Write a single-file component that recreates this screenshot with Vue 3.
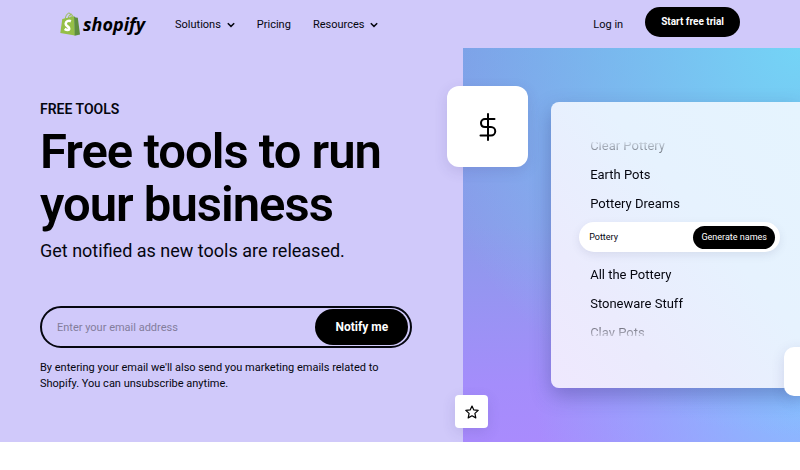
<script setup>
import { ref } from 'vue'

const email = ref('')
const links = [
  { label: 'Solutions', menu: true },
  { label: 'Pricing', menu: false },
  { label: 'Resources', menu: true },
]
const namesAbove = ['Clear Pottery', 'Earth Pots', 'Pottery Dreams']
const namesBelow = ['All the Pottery', 'Stoneware Stuff', 'Clay Pots']
</script>

<template>
  <div class="page">
    <header class="bar">
      <a class="logo" href="#" aria-label="Shopify home">
        <svg class="bag" viewBox="0 0 20 24" aria-hidden="true">
          <path d="M5.2 7C5.6 3.8 7.4 1 9.2 1.1c1.5.1 2 2.400 2 4.900M8.300 6.500C8.700 3.600 10 1.900 11.400 2.200c1 .3 1.400 1.700 1.500 3" fill="none" stroke="#95bf47" stroke-width="1" />
          <path d="M2.300 6.900 14 4.200 15 23.600.3 20.900Z" fill="#95bf47" />
          <path d="M14 4.200 15.600 5.500 17.800 5.800 20 22.400 14.700 23.700Z" fill="#5e8e3e" />
          <path d="M10.900 9.200C8.600 8.200 5.800 9.200 5.700 11.800c0 2.500 3.500 2.700 3.500 4.800 0 1.900-2.300 1.900-4.500.3" fill="none" stroke="#fff" stroke-width="2.600" />
        </svg>
        <span class="word">shopify</span>
      </a>
      <nav class="links" aria-label="Main">
        <template v-for="link in links" :key="link.label">
          <button v-if="link.menu" type="button" class="link">
            {{ link.label }}
            <svg class="chevron" viewBox="0 0 8 6" aria-hidden="true">
              <path d="M.8 1.200 4 4.400 7.200 1.200" fill="none" stroke="currentColor" stroke-width="1.500" />
            </svg>
          </button>
          <a v-else class="link" href="#">{{ link.label }}</a>
        </template>
      </nav>
      <a class="link login" href="#">Log in</a>
      <a class="trial" href="#">Start free trial</a>
    </header>

    <main class="hero">
      <section class="intro">
        <p class="eyebrow">FREE TOOLS</p>
        <h1>Free tools to run<br />your business</h1>
        <p class="lead">Get notified as new tools are released.</p>
        <form class="signup" @submit.prevent>
          <input v-model="email" type="email" aria-label="Email address" placeholder="Enter your email address" />
          <button type="submit">Notify me</button>
        </form>
        <p class="legal">By entering your email we'll also send you marketing emails related to Shopify. You can unsubscribe anytime.</p>
      </section>

      <section class="art" aria-label="Name generator preview">
        <div class="panel">
          <ul class="names above">
            <li v-for="name in namesAbove" :key="name">{{ name }}</li>
          </ul>
          <div class="generator">
            <span>Pottery</span>
            <button type="button">Generate names</button>
          </div>
          <ul class="names below">
            <li v-for="name in namesBelow" :key="name">{{ name }}</li>
          </ul>
        </div>
        <div class="tile dollar">
          <svg viewBox="0 0 18 28" aria-hidden="true">
            <path d="M9 1v26M15.500 6H6a4 4 0 0 0-4 4c0 2.400 1.700 4 4 4h6a4.200 4.200 0 0 1 0 8.500H1.500" fill="none" stroke="#000" stroke-width="2" stroke-linecap="round" stroke-linejoin="round" />
          </svg>
        </div>
        <div class="tile star">
          <svg viewBox="0 0 14 14" aria-hidden="true">
            <path d="M7 1 8.800 4.900 13.200 5.400 9.900 8.400 10.800 12.900 7 10.800 3.200 12.900 4.100 8.400.8 5.400 5.200 4.900Z" fill="none" stroke="#000" stroke-width="1.200" stroke-linejoin="round" />
          </svg>
        </div>
        <div class="tile corner"></div>
      </section>
    </main>
  </div>
</template>

<style>
body {
  margin: 0;
  background: #fff;
}
</style>

<style scoped>
.page {
  font-family: Roboto, "Liberation Sans", sans-serif;
  color: #05060f;
}
button,
input {
  font: inherit;
  color: inherit;
  border: 0;
  margin: 0;
  padding: 0;
  background: none;
}
a {
  color: inherit;
  text-decoration: none;
}
p,
h1,
ul {
  margin: 0;
  padding: 0;
}
.bar {
  display: flex;
  align-items: center;
  height: 48px;
  box-sizing: border-box;
  padding: 0 60px;
  background: #d0c9fa;
}
.logo {
  display: flex;
  align-items: center;
  gap: 3px;
  width: 115px;
}
.bag {
  width: 20px;
  height: 24px;
}
.word {
  font: italic 700 18px/24px "Open Sans", sans-serif;
  color: #000;
}
.links {
  display: flex;
  flex: 1;
  gap: 22px;
}
.link {
  display: flex;
  align-items: center;
  gap: 6px;
  padding-top: 2px;
  font-size: 11px;
  line-height: 16px;
}
.chevron {
  width: 8px;
  height: 6px;
}
.login {
  margin-right: 22px;
}
.trial {
  margin-bottom: 4px;
  padding: 7px 16px;
  border-radius: 15px;
  background: #000;
  color: #fff;
  font-size: 10px;
  font-weight: 700;
  line-height: 16px;
}
.hero {
  display: grid;
  grid-template-columns: 11fr 8fr;
  overflow: hidden;
  background: #d0c9fa;
}
.intro {
  padding: 52px 51px 50px 40px;
}
.eyebrow {
  font-size: 14px;
  font-weight: 600;
  line-height: 18px;
}
h1 {
  margin-top: 7px;
  font-size: 49px;
  font-weight: 600;
  line-height: 53px;
  letter-spacing: -1px;
  color: #000;
  white-space: nowrap;
}
.lead {
  margin-top: 8px;
  font-size: 18px;
  line-height: 24px;
}
.signup {
  display: flex;
  margin-top: 43px;
  padding: 1px 2px;
  border: 2px solid #05060f;
  border-radius: 21px;
}
.signup input {
  flex: 1;
  min-width: 0;
  padding: 0 13px;
  font-size: 11px;
  outline: 0;
}
.signup input::placeholder {
  color: #837d9c;
  opacity: 1;
}
.signup button {
  padding: 0 20px;
  border-radius: 18px;
  background: #000;
  color: #fff;
  font-size: 12px;
  font-weight: 700;
  line-height: 36px;
}
.legal {
  margin-top: 12px;
  font-size: 11px;
  line-height: 16px;
}
.art {
  position: relative;
  padding: 54px 0 54px 88px;
  background:
    radial-gradient(circle at 100% 0, #74d4f6 0, rgba(116, 212, 246, 0) 75%),
    radial-gradient(circle at 105% 85%, #86c0ff 0, rgba(134, 192, 255, 0) 58%),
    linear-gradient(#7f9be6 0, #8b9bea 45%, #a48dfb 85%, #a98bfd 100%);
}
.panel {
  box-sizing: border-box;
  height: 100%;
  padding: 40px 20px 48px 28px;
  border-radius: 8px 0 0 8px;
  background: linear-gradient(50deg, #efe8fe 0, #ebebfd 25%, #e6f2fe 60%, #e5f4fe 100%);
  box-shadow: 0 8px 20px rgba(50, 50, 120, 0.35);
}
.names {
  display: flex;
  flex-direction: column;
  height: 76px;
  padding-left: 11px;
  overflow: hidden;
  list-style: none;
  font-size: 13px;
  line-height: 29px;
}
.names li {
  flex: none;
}
.above {
  justify-content: flex-end;
  mask-image: linear-gradient(rgba(0, 0, 0, 0.1) 0, rgba(0, 0, 0, 0.5) 10px, #000 20px);
}
.below {
  mask-image: linear-gradient(#000 56px, rgba(0, 0, 0, 0.6) 66px, rgba(0, 0, 0, 0.2) 76px);
}
.generator {
  display: flex;
  align-items: center;
  justify-content: space-between;
  margin: 4px 0 8px;
  padding: 4px 5px 3px 10px;
  border-radius: 15px;
  background: #fff;
  box-shadow: 0 3px 8px rgba(80, 80, 120, 0.12);
  font-size: 9px;
  line-height: 23px;
}
.generator button {
  padding: 0 8px;
  border-radius: 12px;
  background: #000;
  color: #fff;
}
.tile {
  position: absolute;
  display: flex;
  align-items: center;
  justify-content: center;
  background: #fff;
  box-shadow: 0 4px 14px rgba(60, 50, 120, 0.14);
}
.dollar {
  top: 38px;
  left: -16px;
  width: 81px;
  height: 81px;
  border-radius: 12px;
}
.dollar svg {
  width: 18px;
  height: 28px;
}
.star {
  bottom: 14px;
  left: -8px;
  width: 33px;
  height: 33px;
  border-radius: 4px;
}
.star svg {
  width: 14px;
  height: 14px;
}
.corner {
  right: -33px;
  bottom: 46px;
  width: 49px;
  height: 49px;
  border-radius: 10px;
}
</style>
